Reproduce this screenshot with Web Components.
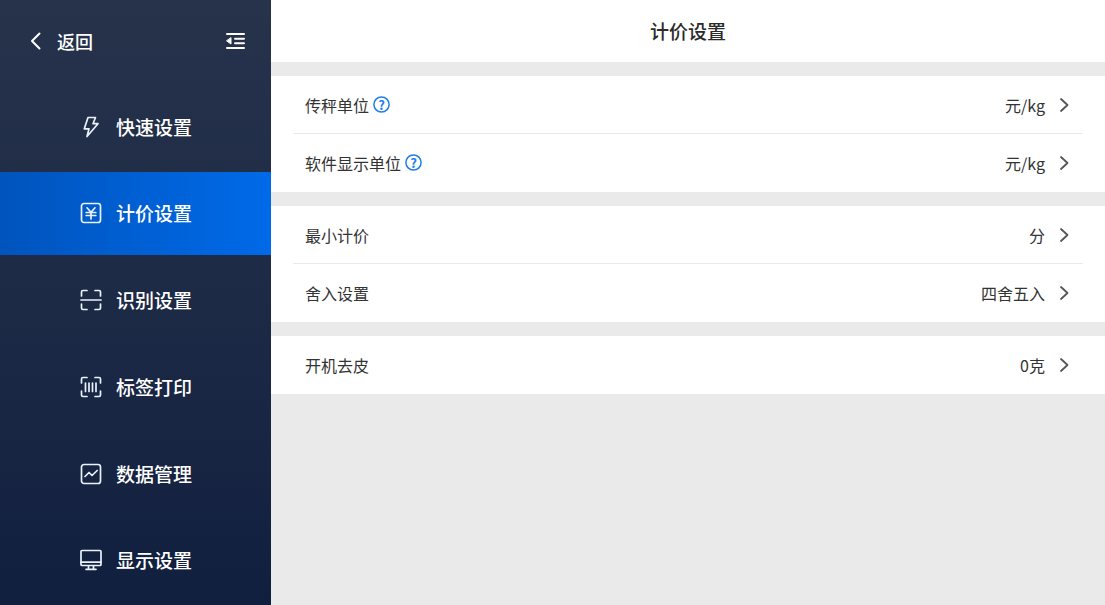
<!DOCTYPE html>
<html lang="zh-CN">
<head>
<meta charset="utf-8">
<meta name="viewport" content="width=device-width, initial-scale=1">
<title>计价设置</title>
<style>
  body {
    margin: 0;
    font-family: "Noto Sans CJK SC", "Noto Sans", sans-serif;
    color: #333;
    background: #eaeaea;
  }
</style>
</head>
<body>
<settings-app>
  <side-bar slot="side">
    <menu-item icon="bolt" href="#quick">快速设置</menu-item>
    <menu-item icon="price" href="#price" active>计价设置</menu-item>
    <menu-item icon="scan" href="#recognize">识别设置</menu-item>
    <menu-item icon="barcode" href="#label">标签打印</menu-item>
    <menu-item icon="chart" href="#data">数据管理</menu-item>
    <menu-item icon="screen" href="#display">显示设置</menu-item>
  </side-bar>
  <page-header>计价设置</page-header>
  <setting-group>
    <setting-row help value="元/kg">传秤单位</setting-row>
    <setting-row help value="元/kg">软件显示单位</setting-row>
  </setting-group>
  <setting-group>
    <setting-row value="分">最小计价</setting-row>
    <setting-row value="四舍五入">舍入设置</setting-row>
  </setting-group>
  <setting-group>
    <setting-row value="0克">开机去皮</setting-row>
  </setting-group>
</settings-app>

<script>
const define = (name, html, setup) => {
  const template = document.createElement('template');
  template.innerHTML = html;
  customElements.define(name, class extends HTMLElement {
    constructor() {
      super();
      this.attachShadow({ mode: 'open' }).append(template.content.cloneNode(true));
    }
    connectedCallback() {
      if (setup) setup(this, this.shadowRoot);
    }
  });
};

const corners = '<path d="M1.5 7V3Q1.5 1.5 3 1.5H7M15 1.5H19Q20.500 1.500 20.500 3V7M20.500 15V19Q20.500 20.500 19 20.500H15M7 20.500H3Q1.500 20.500 1.500 19V15"/>';
const icons = {
  bolt: '<path d="M8 1.500H15.500L13 7.700H18L7 20.500L9 12.800H4.300Z"/>',
  price: '<rect x="1.500" y="1.500" width="19" height="19" rx="2.500"/><path d="M7 5.800L11 10.300L15 5.800M6.200 10.500H15.800M6.200 13.500H15.800M11 10.300V17"/>',
  scan: corners + '<path d="M1 11H21"/>',
  barcode: corners + '<path d="M5.500 7V15.500M9 7V15.500M12.500 7V15.500M16 7V15.500"/>',
  chart: '<rect x="1.500" y="1.500" width="19" height="19" rx="2.500"/><path d="M5 13.500L9 9.500L12 12.500L17.200 7.500"/>',
  screen: '<rect x="1" y="1.500" width="20" height="15" rx="1"/><path d="M1 13.200H21M8.500 17V20M13.500 17V20M6 20.300H16"/>'
};

define('settings-app', `
  <style>
    :host { display: grid; grid-template-columns: 271px minmax(0, 1fr); min-height: 100vh; }
    main { display: flex; flex-direction: column; gap: 14px; }
  </style>
  <slot name="side"></slot>
  <main><slot></slot></main>`);

define('side-bar', `
  <style>
    :host {
      display: flex; flex-direction: column; box-sizing: border-box;
      padding-bottom: 3px; color: #fff;
      background: linear-gradient(#27334b, #1d2a46 50%, #111f3f);
    }
    header { display: flex; align-items: center; justify-content: space-between; height: 85px; box-sizing: border-box; padding: 0 26px 4px 28px; }
    a { display: flex; align-items: center; gap: 13px; color: inherit; text-decoration: none; font-size: 18px; line-height: 24px; font-weight: 500; }
    button { display: block; padding: 0; border: 0; background: none; color: inherit; cursor: pointer; }
    svg { display: block; fill: none; stroke: currentColor; stroke-width: 2; stroke-linecap: round; stroke-linejoin: round; }
    nav { flex: 1; display: flex; flex-direction: column; justify-content: space-between; }
  </style>
  <header>
    <a href="#back">
      <svg width="16" height="20" viewBox="0 0 16 20"><path d="M11.500 2.500L4 10L11.500 17.500"/></svg>
      <span>返回</span>
    </a>
    <button type="button" aria-label="收起菜单">
      <svg width="19" height="18" viewBox="0 0 19 18"><path d="M1 2H18M9 6.700H18M9 11.300H18M1 16H18"/><path d="M5 6V12L0.800 9Z" fill="currentColor" stroke-width="1"/></svg>
    </button>
  </header>
  <nav aria-label="设置"><slot></slot></nav>`);

define('menu-item', `
  <style>
    :host { display: block; }
    a { display: flex; align-items: center; gap: 14px; height: 83px; padding-left: 80px; color: #fff; text-decoration: none; font-size: 19px; line-height: 28px; font-weight: 500; }
    :host([active]) a { background: linear-gradient(90deg, #0054bd, #006ae8); }
    svg { width: 22px; height: 22px; fill: none; stroke: #e9f1fb; stroke-width: 1.7; stroke-linecap: round; stroke-linejoin: round; }
  </style>
  <a><svg viewBox="0 0 22 22" aria-hidden="true"></svg><span><slot></slot></span></a>`,
  (host, root) => {
    root.querySelector('a').href = host.getAttribute('href');
    root.querySelector('svg').innerHTML = icons[host.getAttribute('icon')];
    if (host.hasAttribute('active')) root.querySelector('a').setAttribute('aria-current', 'page');
  });

define('page-header', `
  <style>
    :host { display: block; background: #fff; }
    h1 { margin: 0; padding: 17px 0; font-size: 19px; line-height: 28px; font-weight: 500; text-align: center; color: #2b2b2b; }
  </style>
  <h1><slot></slot></h1>`);

define('setting-group', `
  <style>
    :host { display: block; background: #fff; }
    ::slotted(:not(:last-child)) { --divider: #eaeaea; }
  </style>
  <slot></slot>`);

define('setting-row', `
  <style>
    :host { display: block; padding: 0 22px; }
    .row { display: flex; align-items: center; gap: 4px; height: 58px; box-sizing: border-box; padding: 0 14px 0 12px; border-bottom: 1px solid var(--divider, transparent); font-size: 16px; line-height: 22px; }
    button { padding: 0; border: 0; background: none; font: inherit; color: inherit; cursor: pointer; }
    .help { display: grid; place-items: center; width: 17px; height: 17px; color: #1f7fe8; font-size: 13px; line-height: 17px; font-weight: 700; }
    .help > * { grid-area: 1 / 1; }
    .help[hidden] { display: none; }
    .value { display: flex; align-items: center; gap: 14px; margin-left: auto; }
    svg { display: block; fill: none; stroke-linecap: round; stroke-linejoin: round; }
    .value svg { width: 10px; height: 16px; stroke: #555; stroke-width: 1.8; }
    .help svg { width: 17px; height: 17px; stroke: currentColor; stroke-width: 1.5; }
  </style>
  <div class="row">
    <span id="name"><slot></slot></span>
    <button class="help" type="button" aria-describedby="name" hidden><svg viewBox="0 0 17 17" aria-hidden="true"><circle cx="8.500" cy="8.500" r="7.600"/></svg><span>?</span></button>
    <button class="value" type="button" aria-describedby="name"><span></span><svg viewBox="0 0 10 16" aria-hidden="true"><path d="M2 2L8.500 8L2 14"/></svg></button>
  </div>`,
  (host, root) => {
    root.querySelector('.help').hidden = !host.hasAttribute('help');
    root.querySelector('.value span').textContent = host.getAttribute('value');
  });
</script>
</body>
</html>
